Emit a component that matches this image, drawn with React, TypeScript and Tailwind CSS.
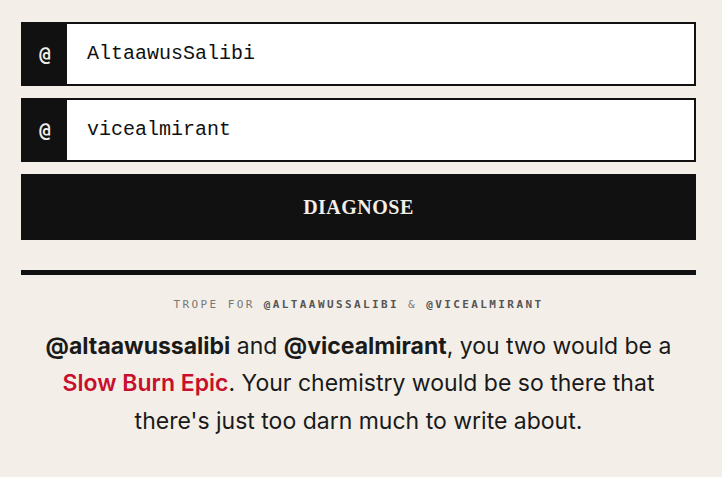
import React from "react";

function Field({ value }: { value: string }) {
  return (
    <div className="flex h-16 border-2 border-[#111111] bg-white">
      <div className="flex w-[44px] items-center justify-center bg-[#111111] text-[19px] font-bold text-[#f3efe8] [font-family:'DejaVu_Sans_Mono',monospace]">
        @
      </div>
      <div className="flex items-center pl-5 text-[20px] text-[#111111] [font-family:'Liberation_Mono',monospace]">
        {value}
      </div>
    </div>
  );
}

export default function App() {
  return (
    <div className="min-h-[477px] bg-[#f3efe8] pt-[22px]">
      <div className="ml-[21px] flex w-[675px] flex-col">
        <div className="flex flex-col gap-3">
          <Field value="AltaawusSalibi" />
          <Field value="vicealmirant" />
          <button className="flex h-[66px] items-center justify-center bg-[#111111] text-[20px] font-bold tracking-[0.5px] text-[#f3efe8] [font-family:'Liberation_Serif',serif]">
            DIAGNOSE
          </button>
        </div>
        <div className="mt-[30px] h-[5px] bg-[#111111]" />
        <div className="mt-[22px] text-center text-[11px] tracking-[2.4px] text-[#777777] [font-family:'DejaVu_Sans_Mono',monospace]">
          TROPE FOR <span className="font-bold text-[#555555]">@ALTAAWUSSALIBI</span> &amp;{" "}
          <span className="font-bold text-[#555555]">@VICEALMIRANT</span>
        </div>
        <p className="mt-[14px] px-[17px] text-center text-[23px] leading-[37.5px] text-[#1a1a1a] [font-family:Inter,sans-serif]">
          <span className="font-bold">@altaawussalibi</span> and{" "}
          <span className="font-bold">@vicealmirant</span>, you two would be a{" "}
          <span className="font-semibold text-[#c8102e]">Slow Burn Epic</span>. Your chemistry would be so there that
          there's just too darn much to write about.
        </p>
      </div>
    </div>
  );
}
